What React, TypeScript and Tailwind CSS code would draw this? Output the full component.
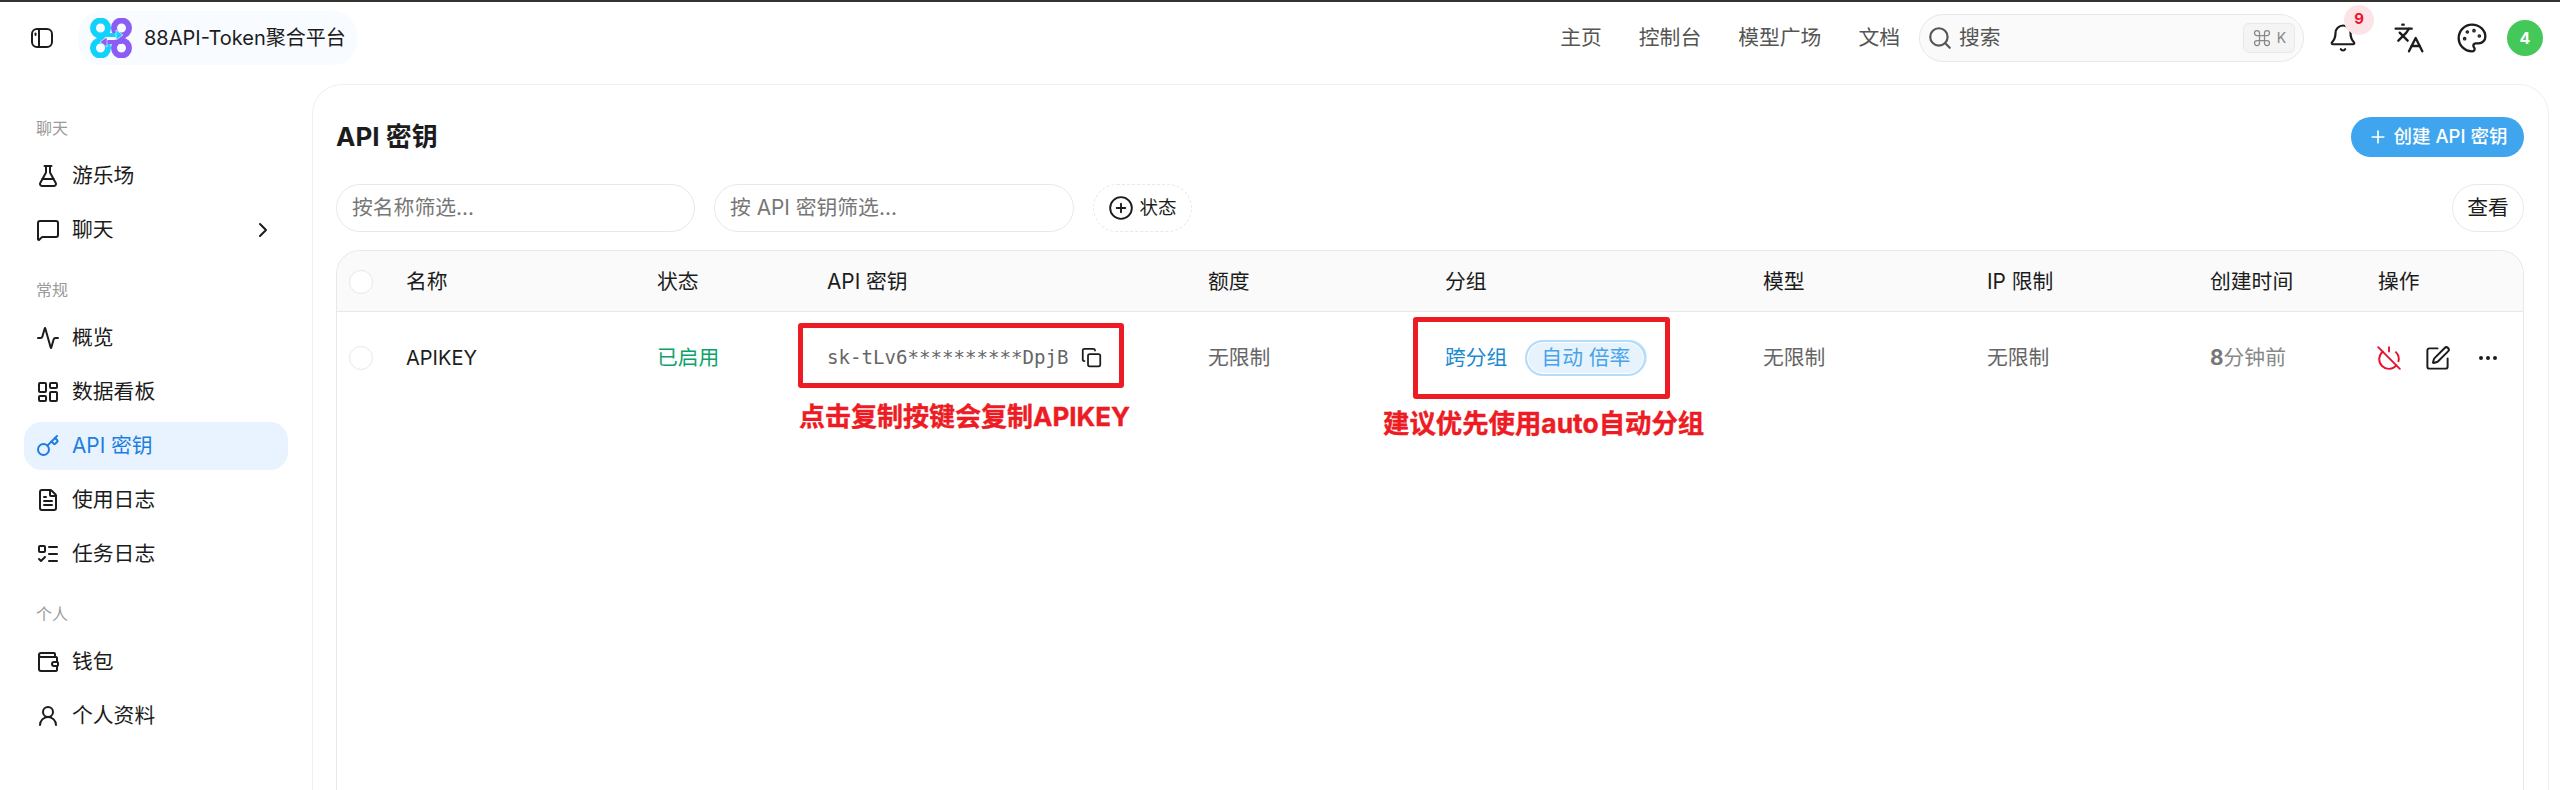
import React from "react";
import {
  FlaskConical,
  MessageSquare,
  ChevronRight,
  Activity,
  LayoutDashboard,
  Key,
  FileText,
  ListTodo,
  Wallet,
  UserRound,
  Search,
  Bell,
  Languages,
  Palette,
  CirclePlus,
  Plus,
  Copy,
  PowerOff,
  SquarePen,
  Ellipsis,
  Command,
} from "lucide-react";

const FONT = "font-['Inter','Noto_Sans_CJK_SC',sans-serif]";

type NavItem = { label: string; icon: React.ElementType; active?: boolean; arrow?: boolean };

const nav: { title: string; items: NavItem[] }[] = [
  {
    title: "聊天",
    items: [
      { label: "游乐场", icon: FlaskConical },
      { label: "聊天", icon: MessageSquare, arrow: true },
    ],
  },
  {
    title: "常规",
    items: [
      { label: "概览", icon: Activity },
      { label: "数据看板", icon: LayoutDashboard },
      { label: "API 密钥", icon: Key, active: true },
      { label: "使用日志", icon: FileText },
      { label: "任务日志", icon: ListTodo },
    ],
  },
  {
    title: "个人",
    items: [
      { label: "钱包", icon: Wallet },
      { label: "个人资料", icon: UserRound },
    ],
  },
];

const Logo = () => (
  <svg width="42" height="40" viewBox="0 0 42 40" fill="none">
    <g stroke="#12d2fb" strokeWidth="6">
      <circle cx="10.5" cy="10" r="7.5" />
      <circle cx="10.5" cy="30" r="7.5" />
    </g>
    <g stroke="#8b5cf6" strokeWidth="6">
      <circle cx="31.5" cy="10" r="7.5" />
      <circle cx="31.5" cy="30" r="7.5" />
    </g>
    <path d="M10 17h17" stroke="#12d2fb" strokeWidth="4" />
    <path d="M26 12l7 5-7 5z" fill="#12d2fb" stroke="#fff" strokeWidth="0.6" />
    <path d="M32 24H16" stroke="#8b5cf6" strokeWidth="4" />
    <path d="M17 19l-7 5 7 5z" fill="#8b5cf6" stroke="#fff" strokeWidth="0.6" />
  </svg>
);

const SidebarToggle = () => (
  <svg width="22" height="20" viewBox="0 0 22 20" fill="none" stroke="#1c1c1c" strokeWidth="2">
    <rect x="1" y="1" width="20" height="18" rx="5" />
    <path d="M8 1v18" />
    <path d="M4.5 5.5v1.5" strokeLinecap="round" />
  </svg>
);

const Sidebar = () => (
  <aside className="w-[312px] shrink-0 px-6 pt-[31px]">
    {nav.map((group) => (
      <div key={group.title} className="mb-[12px]">
        <div className="h-[48px] pl-3 text-[16px] leading-[48px] text-[#9a9a9a]">{group.title}</div>
        <div className="flex flex-col gap-[6px]">
          {group.items.map((item) => {
            const Icon = item.icon;
            return (
              <div
                key={item.label}
                className={`flex h-[48px] items-center gap-[12px] rounded-[18px] pl-3 pr-[13px] text-[20.8px] ${
                  item.active ? "bg-[#e8f3ff] text-[#1c7fe0]" : "text-[#1c1c1c]"
                }`}
              >
                <Icon size={24} strokeWidth={2} className="shrink-0" />
                <span className="flex-1">{item.label}</span>
                {item.arrow && <ChevronRight size={24} strokeWidth={2} />}
              </div>
            );
          })}
        </div>
      </div>
    ))}
  </aside>
);

const Header = () => (
  <header className="flex h-[73px] items-center border-t-2 border-[#333] pl-[31px] pr-[17px]">
    <SidebarToggle />
    <div className="ml-[25px] flex h-[54px] items-center gap-[12px] rounded-[24px] bg-[#f8fbff] pl-3 pr-[11px]">
      <Logo />
      <span className="text-[20px] text-[#1c1c1c]">88API-Token聚合平台</span>
    </div>
    <div className="flex-1" />
    <nav className="flex items-center gap-[37px] text-[20.8px] text-[#555]">
      <span>主页</span>
      <span>控制台</span>
      <span>模型广场</span>
      <span>文档</span>
    </nav>
    <div className="ml-[19px] flex h-[48px] w-[385px] items-center rounded-full border border-[#e8e8e8] bg-[#fafafa] pl-[7px] pr-[8px]">
      <Search size={26} strokeWidth={2} className="text-[#555]" />
      <span className="ml-[6px] flex-1 text-[20.8px] text-[#555]">搜索</span>
      <span className="flex h-[30px] w-[52px] items-center justify-center gap-[5px] rounded-[6px] border border-[#e8e8e8] bg-[#f4f4f4] text-[14px] text-[#888]">
        <Command size={20} strokeWidth={1.5} />K
      </span>
    </div>
    <div className="relative ml-[24px] flex w-[30px] justify-center">
      <Bell size={30} strokeWidth={1.75} className="text-[#1c1c1c]" />
      <span className="absolute left-[16px] top-[-18px] flex h-[30px] w-[30px] items-center justify-center rounded-full bg-[#fbe3e6] text-[15px] font-bold text-[#f0132e]">
        9
      </span>
    </div>
    <Languages size={32} strokeWidth={1.75} className="ml-[35px] text-[#1c1c1c]" />
    <Palette size={32} strokeWidth={1.75} className="ml-[31px] text-[#1c1c1c]" />
    <span className="ml-[19px] flex h-[36px] w-[36px] items-center justify-center rounded-full bg-[#45c85a] text-[16px] font-bold text-white">
      4
    </span>
  </header>
);

const Cell = ({ w, children }: { w: string; children: React.ReactNode }) => (
  <div className={`${w} shrink-0`}>{children}</div>
);

const Table = () => (
  <div className="mt-[18px] flex-1 rounded-t-[24px] border border-b-0 border-[#e8e8e8]">
    <div className="flex h-[61px] items-center rounded-t-[24px] border-b border-[#e8e8e8] bg-[#fafafa] pl-[12px] pt-[2px] text-[20.8px] text-[#1c1c1c]">
      <span className="mr-[33px] h-[24px] w-[24px] shrink-0 rounded-full border border-[#e8e8e8] bg-white" />
      <Cell w="w-[251px]">名称</Cell>
      <Cell w="w-[170px]">状态</Cell>
      <Cell w="w-[381px]">API 密钥</Cell>
      <Cell w="w-[237px]">额度</Cell>
      <Cell w="w-[318px]">分组</Cell>
      <Cell w="w-[224px]">模型</Cell>
      <Cell w="w-[223px]">IP 限制</Cell>
      <Cell w="w-[168px]">创建时间</Cell>
      <Cell w="w-[100px]">操作</Cell>
    </div>
    <div className="flex h-[92px] items-center pl-[12px] text-[20.8px]">
      <span className="mr-[33px] h-[24px] w-[24px] shrink-0 rounded-full border border-[#e8e8e8] bg-white" />
      <Cell w="w-[251px]">
        <span className="text-[20px] text-[#1c1c1c]">APIKEY</span>
      </Cell>
      <Cell w="w-[170px]">
        <span className="text-[#0ca36a]">已启用</span>
      </Cell>
      <Cell w="w-[381px]">
        <div className="flex items-center gap-[13px]">
          <span className="font-['DejaVu_Sans_Mono',monospace] text-[19.1px] text-[#666]">sk-tLv6**********DpjB</span>
          <Copy size={21} strokeWidth={2} className="text-[#1c1c1c]" />
        </div>
      </Cell>
      <Cell w="w-[237px]">
        <span className="text-[#666]">无限制</span>
      </Cell>
      <Cell w="w-[318px]">
        <div className="flex items-center gap-[20px]">
          <span className="text-[#1a8ad0]">跨分组</span>
          <span className="flex h-[32px] w-[117px] items-center justify-center rounded-full border border-white bg-[#e6f3fd] text-[#4aa3e8] shadow-[0_0_0_2px_#b5dcf8,2px_-1px_2px_#7fc2f4]">
            自动 倍率
          </span>
        </div>
      </Cell>
      <Cell w="w-[224px]">
        <span className="text-[#666]">无限制</span>
      </Cell>
      <Cell w="w-[223px]">
        <span className="text-[#666]">无限制</span>
      </Cell>
      <Cell w="w-[168px]">
        <span className="text-[#888]">
          <b className="font-bold text-[#777]">8</b>分钟前
        </span>
      </Cell>
      <Cell w="w-[140px]">
        <div className="-ml-[2px] flex items-center">
          <PowerOff size={26} strokeWidth={1.75} className="text-[#e8112d]" />
          <SquarePen size={27} strokeWidth={1.75} className="ml-[22px] text-[#1c1c1c]" />
          <Ellipsis size={24} strokeWidth={2} className="ml-[25px] text-[#1c1c1c]" />
        </div>
      </Cell>
    </div>
  </div>
);

const Annotations = () => (
  <>
    <div className="absolute left-[798px] top-[323px] h-[65px] w-[326px] rounded-[3px] border-[5px] border-[#ed1c24]" />
    <div className="absolute left-[799px] top-[400px] text-[26px] font-bold leading-[34px] text-[#ed1c24] [-webkit-text-stroke:0.4px_#ed1c24]">
      点击复制按键会复制APIKEY
    </div>
    <div className="absolute left-[1413px] top-[317px] h-[82px] w-[257px] rounded-[3px] border-[5px] border-[#ed1c24]" />
    <div className="absolute left-[1383px] top-[406px] text-[26.4px] font-bold leading-[34px] text-[#ed1c24] [-webkit-text-stroke:0.4px_#ed1c24]">
      建议优先使用auto自动分组
    </div>
  </>
);

export default function App() {
  return (
    <div className={`relative flex h-[790px] w-[2560px] flex-col overflow-hidden bg-white ${FONT}`}>
      <Header />
      <div className="flex min-h-0 flex-1">
        <Sidebar />
        <main className="mt-[11px] flex w-[2237px] flex-col rounded-t-[30px] border border-b-0 border-[#f0f0f0] pl-[23px] pr-[24px] pt-[31px]">
          <div className="flex h-[41px] items-center justify-between">
            <h1 className="text-[26px] font-bold text-[#1c1c1c]">API 密钥</h1>
            <button className="flex h-[40px] w-[173px] items-center justify-center gap-[6px] rounded-full bg-[#3fa5ee] text-[18.5px] font-medium text-white">
              <Plus size={20} strokeWidth={2} />
              创建 API 密钥
            </button>
          </div>
          <div className="mt-[27px] flex h-[48px] items-center">
            <div className="flex h-full w-[359px] items-center rounded-full border border-[#e8e8e8] pl-[15px] text-[20.8px] text-[#777]">
              按名称筛选...
            </div>
            <div className="ml-[19px] flex h-full w-[360px] items-center rounded-full border border-[#e8e8e8] pl-[15px] text-[20.8px] text-[#777]">
              按 API 密钥筛选...
            </div>
            <div className="ml-[19px] flex h-full w-[99px] items-center justify-center gap-[5px] rounded-full border border-dashed border-[#e8e8e8] text-[18.5px] text-[#1c1c1c]">
              <CirclePlus size={26} strokeWidth={1.75} />
              状态
            </div>
            <div className="flex-1" />
            <div className="flex h-full w-[72px] items-center justify-center rounded-full border border-[#e8e8e8] text-[20.8px] text-[#1c1c1c]">
              查看
            </div>
          </div>
          <Table />
        </main>
      </div>
      <Annotations />
    </div>
  );
}
